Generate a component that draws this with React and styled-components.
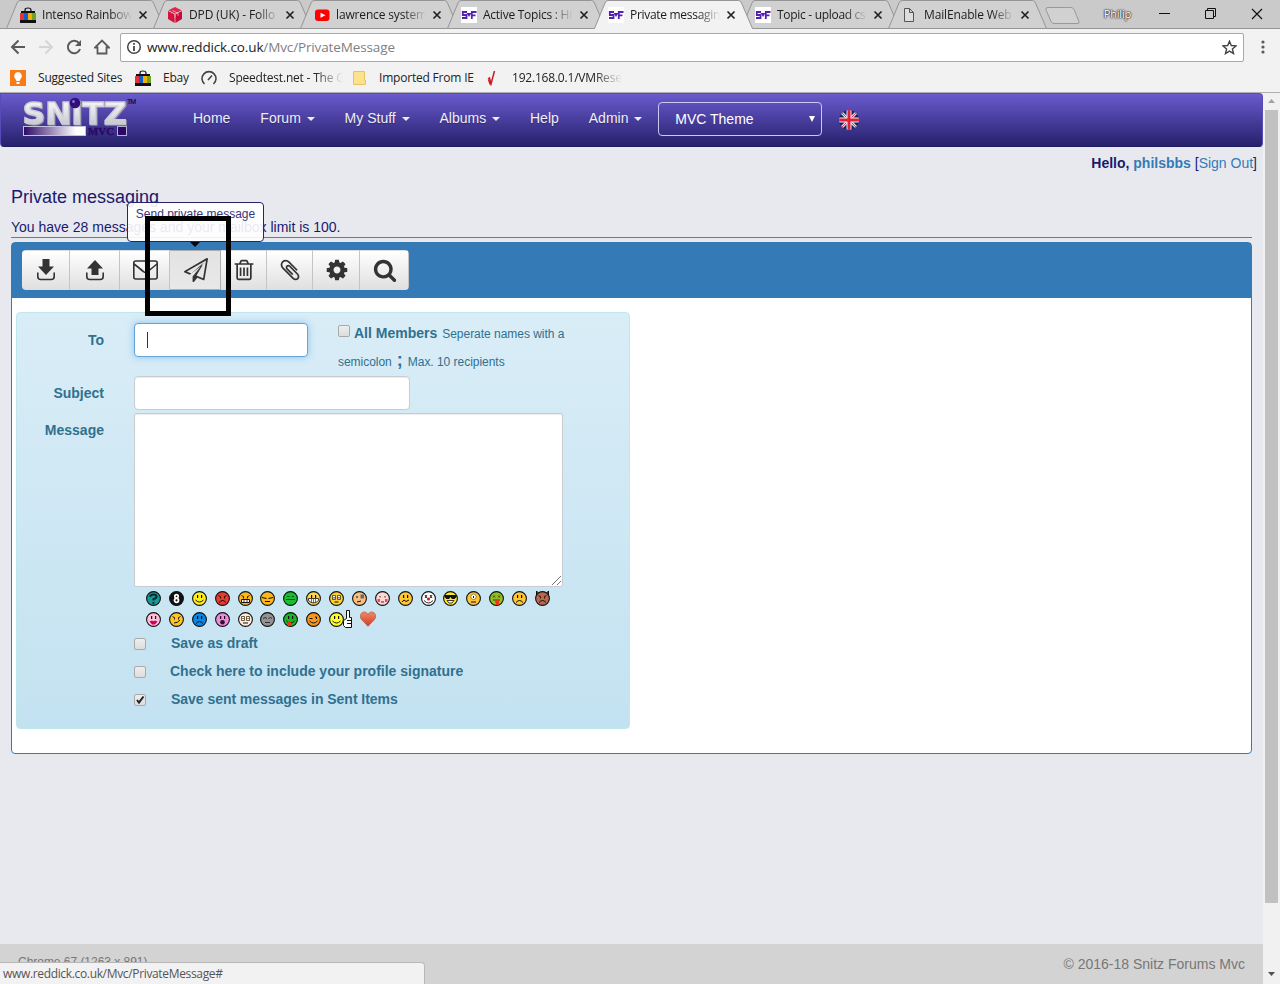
import React from "react";
import styled, { createGlobalStyle, css } from "styled-components";

const GlobalStyle = createGlobalStyle`
  *, *::before, *::after { box-sizing: border-box; }
  html, body { margin: 0; padding: 0; overflow: hidden; }
  body { font-family: "Liberation Sans", Arial, sans-serif; font-size: 14px; line-height: 20px; color: #191970; }
  svg { display: block; flex: none; }
`;

const uiFont = css`
  font-family: "Open Sans", "Noto Sans", sans-serif;
  font-size: 12px;
  white-space: nowrap;
`;

const Window = styled.div`
  width: 1280px;
  height: 984px;
  display: flex;
  flex-direction: column;
  overflow: hidden;
  background: #e8e9ee;
`;

/* ---------- browser frame ---------- */

const TabStrip = styled.div`
  height: 29px;
  flex: none;
  display: flex;
  background: #cacaca;
  padding-left: 6px;
  border-bottom: 1px solid #959595;
`;

const TabBox = styled.div`
  position: relative;
  z-index: ${(p) => (p.$active ? 2 : 1)};
  width: 160px;
  height: 29px;
  margin-right: -13px;
  padding-left: 14px;
  flex: none;
  display: flex;
  align-items: center;
  ${uiFont}
  color: #1c1c1c;
`;

const TabShape = styled.svg`
  position: absolute;
  left: 0;
  top: 0;
`;

const TabIcon = styled.span`
  position: relative;
  width: 16px;
  height: 16px;
  margin-right: 6px;
  flex: none;
`;

const TabTitle = styled.span`
  position: relative;
  width: 90px;
  overflow: hidden;
  letter-spacing: ${(p) => p.$tracking || -0.2}px;
  line-height: 20px;
  mask-image: linear-gradient(to right, #000 68px, transparent 90px);
`;

const TabClose = styled.svg`
  position: relative;
  margin-left: 6px;
`;

const NewTab = styled.svg`
  margin: 7px 0 0 10px;
`;

const WindowControls = styled.div`
  display: flex;
  align-items: center;
  margin-left: auto;
  padding-right: 17px;
  gap: 35px;
  height: 27px;
`;

const Profile = styled.span`
  ${uiFont}
  font-size: 11px;
  letter-spacing: -0.2px;
  color: #fff;
  text-shadow: 0 0 1px #333, 0 0 2px #333, 0 0 1px #555, 0 0 2px #666;
  margin-right: -7px;
`;

const Toolbar = styled.div`
  height: 34px;
  flex: none;
  display: flex;
  align-items: center;
  padding: 3px 11px 1px 10px;
  background: #f2f2f2;
`;

const NavButtons = styled.div`
  display: flex;
  gap: 12px;
  width: 110px;
`;

const Address = styled.div`
  ${uiFont}
  font-size: 13.5px;
  letter-spacing: -0.13px;
  flex: none;
  width: 1124px;
  height: 29px;
  display: flex;
  align-items: center;
  border: 1px solid #a8a8a8;
  border-radius: 2px;
  background: #fff;
  padding: 0 6px 0 5px;
  color: #222;
  & > svg:last-child { margin-left: auto; }
`;

const Url = styled.span`
  margin-left: 5px;
  span { color: #808080; }
`;

const MenuDots = styled.svg`
  margin-left: auto;
`;

const Bookmarks = styled.div`
  height: 30px;
  flex: none;
  display: flex;
  align-items: center;
  background: #f2f2f2;
  border-bottom: 1px solid #b0b0b0;
  padding: 0 0 0 10px;
  ${uiFont}
  color: #222;
`;

const Bookmark = styled.div`
  display: flex;
  align-items: center;
  width: ${(p) => p.$w}px;
  gap: 12px;
  flex: none;
`;

const BookmarkText = styled.span`
  ${(p) => p.$w && css`width: ${p.$w}px; overflow: hidden;`}
  letter-spacing: -0.2px;
  ${(p) => p.$fade && css`mask-image: linear-gradient(to right, #000 calc(100% - 28px), transparent);`}
`;

/* ---------- page ---------- */

const Viewport = styled.div`
  flex: 1;
  display: flex;
  min-height: 0;
`;

const Page = styled.div`
  position: relative;
  width: 1263px;
  display: flex;
  flex-direction: column;
`;

const Navbar = styled.nav`
  height: 54px;
  flex: none;
  display: flex;
  border-radius: 0 4px 4px 4px;
  background: linear-gradient(#6a5acd, #483d9d 50%, #26216b);
  border: 1px solid #5a4cb8;
  border-bottom-color: #201b60;
  color: #eeeef8;
  padding-left: 20px;
`;

const Logo = styled.svg`
  margin: 1px 41px 0 0;
`;

const NavItem = styled.a`
  display: flex;
  align-items: center;
  height: 20px;
  padding: 0 15px;
  margin-top: 14px;
  text-shadow: 0 1px 1px rgba(0, 0, 0, 0.3);
  white-space: nowrap;
`;

const Caret = styled.span`
  margin-left: 5.8px;
  margin-top: 2px;
  border-top: 4px solid currentColor;
  border-left: 4px solid transparent;
  border-right: 4px solid transparent;
`;

const ThemeSelect = styled.div`
  width: 164px;
  height: 34px;
  margin: 8px 17px 0 1px;
  padding: 0 6px 0 16px;
  display: flex;
  align-items: center;
  justify-content: space-between;
  border: 1px solid #ccc8ee;
  border-radius: 4px;
  color: #fff;
`;

const Flag = styled.svg`
  margin-top: 16px;
`;

const Greeting = styled.div`
  height: 20px;
  margin: 6px 6px 0 0;
  text-align: right;
  b span, a { color: #337ab7; }
`;

const Heading = styled.h1`
  margin: 14px 0 0 11px;
  font-size: 18px;
  font-weight: 400;
  line-height: 20px;
`;

const Quota = styled.div`
  margin: 10px 11px 4px;
  height: 21px;
  border-bottom: 1px solid #777;
`;

const Panel = styled.section`
  width: 1241px;
  height: 512px;
  margin-left: 11px;
  border: 1px solid #337ab7;
  border-radius: 4px;
  background: #fff;
`;

const PanelHead = styled.div`
  height: 55px;
  background: #337ab7;
  padding: 7px 10px;
`;

const ButtonGroup = styled.div`
  display: flex;
  width: max-content;
  height: 40px;
  border-radius: 4px;
  overflow: hidden;
`;

const ToolButton = styled.button`
  width: ${(p) => p.$w}px;
  height: 40px;
  padding: 0 0 1px 1px;
  display: flex;
  align-items: center;
  justify-content: center;
  border: 1px solid #ddd;
  border-width: 1px 1px 1px 0;
  border-right-color: #c4c4c4;
  color: #333;
  background: linear-gradient(#fff, #e0e0e0);
  ${(p) => p.$hover && css`
    background: linear-gradient(#e3e3e3, #e8e8e8);
    border-color: #adadad;
  `}
`;

const Well = styled.form`
  width: 614px;
  height: 417px;
  margin: 14px 0 0 4px;
  padding-top: 6px;
  border: 1px solid #c0e6ee;
  border-radius: 4px;
  background: linear-gradient(#d9edf7, #c3e2f1);
  color: #31708f;
`;

const FormRow = styled.div`
  display: flex;
  gap: 30px;
  height: ${(p) => p.$h}px;
`;

const Label = styled.label`
  width: 87px;
  text-align: right;
  font-weight: 700;
  padding-top: ${(p) => p.$top}px;
`;

const Field = styled.div`
  width: ${(p) => p.$w}px;
  height: ${(p) => p.$h || 34}px;
  margin-top: ${(p) => p.$top || 0}px;
  background: #fff;
  border: 1px solid #c8ccd0;
  border-radius: ${(p) => (p.$square ? 2 : 4)}px;
  box-shadow: inset 0 1px 1px rgba(0, 0, 0, 0.075);
  display: flex;
  ${(p) => p.$focus && css`
    border-color: #66a5d8;
    box-shadow: 0 0 7px rgba(102, 175, 233, 0.7);
  `}
`;

const TextCursor = styled.i`
  width: 1px;
  height: 16px;
  margin: 8px 0 0 12px;
  background: #333;
`;

const Grip = styled.svg`
  margin: auto 0 0 auto;
`;

const Hint = styled.div`
  width: 240px;
  padding-top: 1px;
`;

const HintLine = styled.div`
  display: flex;
  align-items: baseline;
  height: 28px;
  font-size: 12px;
  line-height: 28px;
  letter-spacing: -0.03px;
  white-space: nowrap;
`;

const HintStrong = styled.b`
  font-size: ${(p) => p.$size}px;
  line-height: 20px;
  letter-spacing: 0;
  margin: 0 ${(p) => p.$mr}px 0 ${(p) => p.$ml}px;
`;

const Check = styled.span`
  display: inline-flex;
  width: 12px;
  height: 12px;
  border: 1px solid #a9a9a9;
  border-radius: 2px;
  background: linear-gradient(#eee, #ddd);
  ${(p) => p.$inline && css`align-self: center; margin-top: -6px;`}
`;

const Smileys = styled.div`
  display: grid;
  grid-template-columns: repeat(18, 22.88px);
  grid-auto-rows: 21px;
  margin: 0 0 0 129px;
  padding-top: 4px;
  height: 43px;
`;

const SmileyCell = styled.span`
  margin: ${(p) => (p.$kind === "thumb" ? "-2px 0 0" : p.$kind === "heart" ? "-1px 0 0 8px" : "0")};
`;

const Option = styled.div`
  display: flex;
  align-items: center;
  height: 28px;
  padding-left: 117px;
  font-weight: 700;
`;

const OptionText = styled.span`
  margin: -2px 0 0 ${(p) => p.$ml || 25}px;
  letter-spacing: ${(p) => (p.$ml ? 0 : -0.04)}px;
`;

const Footer = styled.footer`
  height: 40px;
  margin-top: auto;
  padding: 10px 18px 0;
  display: flex;
  justify-content: space-between;
  background: #d3d3d3;
  color: #777;
`;

const Agent = styled.span`
  font-size: 12px;
  line-height: 14px;
  letter-spacing: -0.03px;
  padding-top: 1px;
`;

const StatusBubble = styled.div`
  position: absolute;
  left: 0;
  bottom: 0;
  width: 425px;
  height: 22px;
  padding: 0 3px;
  border: 1px solid #b8b8b8;
  border-width: 1px 1px 0 0;
  border-radius: 0 4px 0 0;
  background: #f2f2f2;
  color: #555;
  ${uiFont}
  line-height: 22px;
  letter-spacing: -0.34px;
`;

const Tooltip = styled.div`
  position: absolute;
  z-index: 3;
  left: 127px;
  top: 109px;
  width: 137px;
  height: 40px;
  border: 1px solid #29236f;
  border-radius: 4px;
  background: rgba(255, 255, 255, 0.9);
  color: #3b3679;
  text-align: center;
  font-size: 12px;
  line-height: 22px;
  white-space: nowrap;
  &::after {
    content: "";
    position: absolute;
    left: 62px;
    top: 39px;
    border-top: 5px solid #060816;
    border-left: 5px solid transparent;
    border-right: 5px solid transparent;
  }
`;

const Highlight = styled.div`
  position: absolute;
  z-index: 4;
  left: 145px;
  top: 123px;
  width: 86px;
  height: 100px;
  border: 5px solid #000;
`;

const Scrollbar = styled.div`
  width: 17px;
  display: flex;
  flex-direction: column;
  align-items: center;
  background: #f1f1f1;
  padding: 6px 0 8px;
  & > svg:last-child { margin-top: auto; }
`;

const Thumb = styled.div`
  width: 13px;
  height: 793px;
  margin-top: 7px;
  background: #c1c1c1;
`;

/* ---------- drawings ---------- */

const BagIcon = () => (
  <svg width="16" height="16" viewBox="0 0 16 16">
    <path d="M5 5V3q0-2 3-2t3 2v2" fill="none" stroke="#111" strokeWidth="1.2" />
    <path d="M1 4h14v2H1z" fill="#111" />
    <path d="M0 6h4v7H0z" fill="#e53238" /><path d="M4 6h4v7H4z" fill="#1260c4" />
    <path d="M8 6h4v7H8z" fill="#f5af02" /><path d="M12 6h4v7h-4z" fill="#6ea51c" />
    <path d="M0 13h16v3H0z" fill="#111" />
  </svg>
);
const DpdIcon = () => (
  <svg width="16" height="16" viewBox="0 0 16 16">
    <path d="M8 0l6.6 3.300L8 6.800 1.400 3.300z" fill="#e0284f" />
    <path d="M1 4l6.600 3.600V16L1 12z" fill="#d5113c" /><path d="M15 4L8.400 7.600V16L15 12z" fill="#c80b38" />
    <path d="M5.500 3.500L11 6.300v2.500M8 7.500v3" fill="none" stroke="#f1b8c6" strokeWidth=".8" />
  </svg>
);
const TubeIcon = () => (
  <svg width="16" height="16" viewBox="0 0 16 16">
    <rect x="1" y="2.500" width="14.500" height="11.500" rx="3" fill="#f00" /><path d="M6.500 5.700l5 2.500-5 2.600z" fill="#fff" />
  </svg>
);
const SfIcon = () => (
  <svg width="16" height="16" viewBox="0 0 16 16">
    <rect width="16" height="16" fill="#fff" />
    <path d="M6 5H1.800v3h3.700v3H1M10.800 12V5H15.500M10.800 8.300H14.500" fill="none" stroke="#5421ae" strokeWidth="1.800" />
    <path d="M5.500 6h5L8 10z" fill="#5421ae" />
  </svg>
);
const FileIcon = () => (
  <svg width="16" height="16" viewBox="0 0 16 16">
    <path d="M2.500 1.500h5l4 4v9h-9zM7.500 1.500v4h4" fill="#ddd" stroke="#555" />
  </svg>
);

const FACES = [
  ["#159a97", "question"], ["#111", "eight"], ["#ffef17", "smile"], ["#e73d31", "angry"], ["#ffb718", "grit"], ["#ffb718", "smirk"],
  ["#18bd31", "flat"], ["#ffd84a", "grin"], ["#ffcf31", "wide"], ["#ffbd7b", "patch"], ["#ffd5d5", "blush"], ["#ffc631", "wry"],
  ["#fff", "clown"], ["#ffe72c", "cool"], ["#ffc631", "cyclops"], ["#91bf24", "sick"], ["#ffc631", "sad"], ["#b8684f", "devil"],
  ["#ffc0d8", "kiss"], ["#ffc425", "evil"], ["#0b86e3", "sad"], ["#f087e1", "shout"], ["#ffeadb", "glasses"], ["#929292", "sleep"],
  ["#16b721", "tongue"], ["#f59622", "wink"], ["#ffff20", "thumb"], ["#df5838", "heart"],
];

function FaceDetail({ kind }) {
  const eyes = <path d="M5 4h1.200v3H5zM9 4h1.200v3H9z" fill="#111" />;
  const smile = <path d="M3.500 9q4 4 8 0" fill="none" stroke="#111" />;
  const frown = <path d="M4 11.500q3.500-4 7 0" fill="none" stroke="#111" />;
  const brows = <path d="M3.500 4.500l2.500 1.500M11.500 4.500L9 6M5.500 6v1.500M9.500 6v1.500" stroke="#111" strokeWidth=".9" />;
  const roundEyes = <path d="M3.500 4.500h3v4h-3zM8.500 4.500h3v4h-3z" fill="#fff" stroke="#443410" strokeWidth=".8" />;
  switch (kind) {
    case "question": return <path d="M4.500 6V4.500Q5 3.500 7.500 3.500q3 0 3 2T7.500 8v1.500M7.500 11v1.800" fill="none" stroke="#042b34" strokeWidth="2" />;
    case "eight": return <><circle cx="7.500" cy="5.300" r="1.700" fill="none" stroke="#fff" strokeWidth="1.700" /><circle cx="7.500" cy="9.300" r="2" fill="none" stroke="#fff" strokeWidth="1.800" /></>;
    case "angry": return <>{brows}{frown}</>;
    case "grit": return <>{brows}<path d="M3.500 8.500h8v3h-8z" fill="#fff" stroke="#111" /><path d="M6 9v3M9 9v3" stroke="#111" strokeWidth=".8" /></>;
    case "smirk": return <path d="M2 6.500l4.500 1M13 6.500l-4.500 1M5 10.500h5" stroke="#111" strokeWidth="1.200" fill="none" />;
    case "flat": return <path d="M4 5.500h2.500M8.500 5.500H11M3 8.500h9" stroke="#075714" fill="none" />;
    case "grin": return <>{eyes}<path d="M2.500 7.500h10v2q-5 5-10 0z" fill="#fff" stroke="#111" strokeWidth=".8" /><path d="M5.500 8v3.500M9.500 8v3.500M7.500 8v4" stroke="#333" strokeWidth=".7" /></>;
    case "wide": return <>{roundEyes}<path d="M4.500 6h1v1.500h-1zM9.500 6h1v1.500h-1z" fill="#111" /><path d="M5.500 11h4" stroke="#111" /></>;
    case "patch": return <><path d="M8.500 3.500h3.500v4H8.500z" fill="#566b7c" /><path d="M5 5v2M5 11l4-1" stroke="#111" /></>;
    case "blush": return <><path d="M5 5v1.500M10 5v1.500M6 11h3" stroke="#333" /><path d="M2.500 8h2.500v3H2.500zM10 8h2.500v3H10z" fill="#ff4456" /></>;
    case "wry": return <>{eyes}<path d="M4 11l2-2 2 1.500L11 9" fill="none" stroke="#111" /></>;
    case "clown": return <><path d="M4 4l2 3M6 4L4 7M9 4l2 3M11 4L9 7M3 9.500q4.500 5 9 0" fill="none" stroke="#111" strokeWidth=".9" /><circle cx="7.500" cy="8" r="1.600" fill="#e0182d" /></>;
    case "cool": return <><path d="M1.500 4h12v2l-2 2H9L7.500 6 6 8H3.500l-2-2z" fill="#111" /><path d="M4 9.500h7l-2 2.500H6z" fill="#fff" stroke="#111" strokeWidth=".8" /></>;
    case "cyclops": return <><circle cx="7.500" cy="5.800" r="2.700" fill="#fff" stroke="#8a681d" strokeWidth=".8" /><path d="M7 5h1v2H7z" fill="#111" /><path d="M5 11h5" stroke="#111" /></>;
    case "sick": return <><path d="M4 4.500l2 2M6 4.500l-2 2M9 4.500l2 2M11 4.500l-2 2M4 9h7" stroke="#263f04" strokeWidth=".9" /><path d="M6 9h4v5H7z" fill="#e33a13" /></>;
    case "sad": return <>{eyes}{frown}</>;
    case "devil": return <>{brows}{frown}</>;
    case "kiss": return <>{eyes}<path d="M3.500 9.500l2.500-1 1.500.8L9 8.500l2.500 1-2.500 3H6z" fill="#c90062" /></>;
    case "evil": return <>{brows}<path d="M5 11q4 0 6-3" fill="none" stroke="#111" /></>;
    case "shout": return <>{eyes}<circle cx="7.500" cy="10.200" r="2.300" fill="#31102e" /></>;
    case "glasses": return <>{roundEyes}<path d="M5 6v1M10 6v1M5 11h5" stroke="#111" /></>;
    case "sleep": return <path d="M3 6.500l2-1 2 1M8.500 6.500l2-1 1.500 1M5 10.500h5" fill="none" stroke="#333" />;
    case "tongue": return <>{eyes}{smile}<path d="M4 9.500h4V14H5z" fill="#e43716" /></>;
    case "wink": return <><path d="M3.500 6.500h3M9 5h1.500v2" fill="none" stroke="#111" />{smile}</>;
    default: return <>{eyes}{smile}</>;
  }
}

function Smiley({ color, kind }) {
  if (kind === "heart") {
    return (
      <svg width="16" height="16" viewBox="0 0 16 16">
        <defs><linearGradient id="heart" x2="0" y2="1"><stop stopColor="#f38b65" /><stop offset="1" stopColor="#cc3a26" /></linearGradient></defs>
        <path d="M8 15.300L1.500 8.500C-1 5 1 1 4.300 1 6.200 1 7.400 2.200 8 3.500 8.600 2.200 9.800 1 11.700 1 15 1 17 5 14.500 8.500z" fill="url(#heart)" stroke="#ae4632" strokeWidth=".6" />
      </svg>
    );
  }
  const thumb = kind === "thumb";
  return (
    <svg width={thumb ? 24 : 15} height={thumb ? 19 : 15} viewBox={thumb ? "0 -2 24 19" : "0 0 15 15"}>
      {kind === "devil" && <path d="M1.500 0v4l3-1zM13.500 0v4l-3-1z" fill="#a8604d" stroke="#111" />}
      <circle cx="7.500" cy="7.500" r="6.900" fill={color} stroke="#111" strokeWidth="1.100" />
      <FaceDetail kind={kind} />
      {thumb && <path d="M17.500-1.500h3v7h2v10h-6l-2-2v-5l3-2zM18 8.500h4.500M18 11.500h4.500" fill="#fff" stroke="#111" />}
    </svg>
  );
}

const PATHS = {
  trash: "M704 736v576q0 14-9 23t-23 9h-64q-14 0-23-9t-9-23v-576q0-14 9-23t23-9h64q14 0 23 9t9 23zm256 0v576q0 14-9 23t-23 9h-64q-14 0-23-9t-9-23v-576q0-14 9-23t23-9h64q14 0 23 9t9 23zm256 0v576q0 14-9 23t-23 9h-64q-14 0-23-9t-9-23v-576q0-14 9-23t23-9h64q14 0 23 9t9 23zm128 724v-948h-896v948q0 22 7 40.500t14.500 27 10.500 8.500h832q3 0 10.500-8.500t14.500-27 7-40.500zm-672-1076h448l-48-117q-7-9-17-11h-317q-10 2-17 11zm928 32v64q0 14-9 23t-23 9h-96v948q0 83-47 143.500t-113 60.500h-832q-66 0-113-58.500t-47-141.500v-952h-96q-14 0-23-9t-9-23v-64q0-14 9-23t23-9h309l70-167q15-37 54-63t79-26h320q40 0 79 26t54 63l70 167h309q14 0 23 9t9 23z",
  plane: "M1764 11q33 24 27 64l-256 1536q-5 29-32 45-14 8-31 8-11 0-24-5l-453-185-242 295q-18 23-49 23-13 0-22-4-19-7-30.500-23.500t-11.500-36.500v-349l864-1059-1069 925-395-162q-37-14-40-55-2-40 32-59l1664-960q15-9 32-9 20 0 36 11zm-342 1499l221-1323-1434 827 336 137 863-639-478 797z",
  clip: "M1596 1385q0 117-79 196t-196 79q-135 0-235-100l-777-776q-113-115-113-271 0-159 110-270t269-111q158 0 273 113l605 606q10 10 10 22 0 16-30.500 46.500t-46.500 30.500q-13 0-23-10l-606-607q-79-77-181-77-106 0-179 75t-73 181q0 105 76 181l776 777q63 63 145 63 64 0 106-42t42-106q0-82-63-145l-581-581q-26-24-60-24-29 0-48 19t-19 48q0 32 25 59l410 410q10 10 10 22 0 16-31 47t-47 31q-12 0-22-10l-410-410q-63-61-63-149 0-82 57-139t139-57q88 0 149 63l581 581q100 98 100 235z",
  cog: "M1152 896q0-106-75-181t-181-75-181 75-75 181 75 181 181 75 181-75 75-181zm512-109v222q0 12-8 23t-20 13l-185 28q-19 54-39 91 35 50 107 138 10 12 10 25t-9 23q-27 37-99 108t-94 71q-12 0-26-9l-138-108q-44 23-91 38-16 136-29 186-7 28-36 28h-222q-14 0-24.500-8.500t-11.500-21.500l-28-184q-49-16-90-37l-141 107q-10 9-25 9-14 0-25-11-126-114-165-168-7-10-7-23 0-12 8-23 15-21 51-66.500t54-70.500q-27-50-41-99l-183-27q-13-2-21-12.500t-8-23.500v-222q0-12 8-23t19-13l186-28q14-46 39-92-40-57-107-138-10-12-10-24 0-10 9-23 26-36 98.500-107.500t94.500-71.500q13 0 26 10l138 107q44-23 91-38 16-136 29-186 7-28 36-28h222q14 0 24.500 8.500t11.500 21.500l28 184q49 16 90 37l142-107q9-9 24-9 13 0 25 10 129 119 165 170 7 8 7 22 0 12-8 23-15 21-51 66.500t-54 70.500q26 50 41 98l183 28q13 2 21 12.500t8 23.500z",
  search: "M1216 832q0-185-131.500-316.500t-316.500-131.500-316.500 131.500-131.500 316.500 131.500 316.500 316.500 131.500 316.500-131.500 131.500-316.500zm512 832q0 52-38 90t-90 38q-54 0-90-38l-343-342q-179 124-399 124-143 0-273.500-55.500t-225-150-150-225-55.500-273.500 55.500-273.500 150-225 225-150 273.500-55.500 273.500 55.500 225 150 150 225 55.500 273.500q0 220-124 399l343 343q37 37 37 90z",
};

const Glyph = ({ name, size = 24 }) => (
  <svg width={size} height={size} viewBox="0 0 1792 1792" fill="currentColor"><path d={PATHS[name]} /></svg>
);
const TrayIcon = ({ up }) => (
  <svg width="18" height="22" viewBox="0 0 18 22">
    <path d="M.8 13.500v4q0 3 3 3h10.400q3 0 3-3v-4" fill="none" stroke="currentColor" strokeWidth="1.600" />
    <path d={up ? "M9 1l8 8.500h-4.500V16h-7V9.500H1z" : "M5.500 0h7v7.500H17L9 16 1 7.500h4.500z"} fill="currentColor" />
  </svg>
);
const MailIcon = () => (
  <svg width="25" height="20" viewBox="0 0 25 20" fill="none" stroke="currentColor" strokeWidth="1.600">
    <rect x=".8" y="1" width="23.400" height="18" rx="2" />
    <path d="M1 4q6.500 5 9.500 7.700 2 1.500 4 0Q18 9 24 4" />
  </svg>
);

const Tab = ({ icon, title, active, tracking }) => (
  <TabBox $active={active}>
    <TabShape width="160" height="29">
      <path d="M.5 28.500L11 3Q12 .5 14 .5H144.500Q146.500.5 147.500 3L158.500 28.500" fill={active ? "#f2f2f2" : "#d1d1d1"} stroke="#959595" />
      <path d="M1 28.500h157" stroke={active ? "#f2f2f2" : "#959595"} />
    </TabShape>
    <TabIcon>{icon}</TabIcon>
    <TabTitle $tracking={tracking}>{title}</TabTitle>
    <TabClose width="10" height="10"><path d="M1.500 1.500l7 7m0-7l-7 7" stroke="#222" strokeWidth="1.700" /></TabClose>
  </TabBox>
);

const Tick = () => (
  <svg width="10" height="10"><path d="M2 5l2 2.500L8.500 1.500" fill="none" stroke="#222" strokeWidth="2" /></svg>
);

export default function App() {
  return (
    <Window>
      <GlobalStyle />
      <TabStrip>
        <Tab icon={<BagIcon />} title="Intenso Rainbow" tracking={-0.2} />
        <Tab icon={<DpdIcon />} title="DPD (UK) - Follo" tracking={-0.1} />
        <Tab icon={<TubeIcon />} title="lawrence system" tracking={-0.15} />
        <Tab icon={<SfIcon />} title="Active Topics : Hi" tracking={-0.25} />
        <Tab icon={<SfIcon />} title="Private messagin" tracking={-0.3} active />
        <Tab icon={<SfIcon />} title="Topic - upload cs" tracking={-0.3} />
        <Tab icon={<FileIcon />} title="MailEnable Web" tracking={-0.15} />
        <NewTab width="35" height="18">
          <path d="M3 .5h23q2 0 3 2l5 12q1 2-2 2H9q-2 0-3-2L1 3Q0 .5 3 .5z" fill="#d1d1d1" stroke="#999" />
        </NewTab>
        <WindowControls>
          <Profile>Philip</Profile>
          <svg width="11" height="11"><path d="M0 5.500h11" stroke="#111" /></svg>
          <svg width="11" height="11"><path d="M.5 2.500h8v8h-8zM2.500 2.500v-2h8v8h-2" fill="none" stroke="#111" /></svg>
          <svg width="12" height="12"><path d="M1 1l10 10m0-10L1 11" stroke="#111" strokeWidth="1.200" /></svg>
        </WindowControls>
      </TabStrip>

      <Toolbar>
        <NavButtons>
          <svg width="16" height="16" fill="none" stroke="#5a5a5a" strokeWidth="2"><path d="M15 8H2m6.500-6.500L2 8l6.500 6.500" /></svg>
          <svg width="16" height="16" fill="none" stroke="#d5d5d5" strokeWidth="2"><path d="M1 8h13M7.500 1.500L14 8l-6.500 6.500" /></svg>
          <svg width="16" height="16" fill="none" stroke="#5a5a5a" strokeWidth="2"><path d="M13 4.200A6.200 6.200 0 1 0 14 10" /><path d="M15 1v6H9z" fill="#5a5a5a" stroke="none" /></svg>
          <svg width="16" height="16" fill="none" stroke="#5a5a5a" strokeWidth="1.800"><path d="M1 8.500h2.500v6h9v-6H15L8 1.500z" /></svg>
        </NavButtons>
        <Address>
          <svg width="16" height="16" fill="none" stroke="#444" strokeWidth="1.500"><circle cx="8" cy="8" r="6.300" /><path d="M8 7v5M8 4v1.700" strokeWidth="1.800" /></svg>
          <Url>www.reddick.co.uk<span>/Mvc/PrivateMessage</span></Url>
          <svg width="15" height="15" viewBox="0 0 16 16"><path d="M8 1.300l1.900 4.600 5 .4-3.800 3.300 1.200 4.900L8 11.900l-4.300 2.600 1.200-4.900L1.100 6.300l5-.4z" fill="none" stroke="#444" strokeWidth="1.500" /></svg>
        </Address>
        <MenuDots width="13" height="16"><g fill="#5a5a5a"><circle cx="7" cy="3" r="1.600" /><circle cx="7" cy="8" r="1.600" /><circle cx="7" cy="13" r="1.600" /></g></MenuDots>
      </Toolbar>

      <Bookmarks>
        <Bookmark $w={125}>
          <svg width="16" height="16"><rect width="16" height="16" fill="#f97b16" /><path d="M8 2a4 4 0 0 0-2.500 7l.8 2h3.400l.8-2A4 4 0 0 0 8 2zM6.500 12h3v2h-3z" fill="#fff" /></svg>
          <BookmarkText>Suggested Sites</BookmarkText>
        </Bookmark>
        <Bookmark $w={66}><BagIcon /><BookmarkText>Ebay</BookmarkText></Bookmark>
        <Bookmark $w={150}>
          <svg width="16" height="16" fill="none" stroke="#444" strokeWidth="1.600"><path d="M3.500 14A7 7 0 1 1 12.500 14M7 10l4-4.500" /></svg>
          <BookmarkText $w={114} $fade>Speedtest.net - The G</BookmarkText>
        </Bookmark>
        <Bookmark $w={133}>
          <svg width="16" height="16"><path d="M2.500 1.500h11v9h1v4h-12z" fill="#fbe28d" stroke="#e6c45f" /></svg>
          <BookmarkText>Imported From IE</BookmarkText>
        </Bookmark>
        <Bookmark $w={140}>
          <svg width="16" height="16" fill="none" stroke="#c51c24" strokeWidth="1.500"><path d="M4 9l1.500-1 1.500 6L10.500 1" /><path d="M4.500 9.500l1.800 5" /></svg>
          <BookmarkText $w={110} $fade>192.168.0.1/VMReset</BookmarkText>
        </Bookmark>
      </Bookmarks>

      <Viewport>
        <Page>
          <Navbar>
            <Logo width="116" height="44">
              <defs>
                <linearGradient id="metal" x2="0" y2="1"><stop stopColor="#fff" /><stop offset=".55" stopColor="#dedee6" /><stop offset="1" stopColor="#b8b8c2" /></linearGradient>
                <linearGradient id="bar"><stop stopColor="#2c0964" /><stop offset=".85" stopColor="#fff" /></linearGradient>
              </defs>
              <text x="1.500" y="28.500" fontFamily="DejaVu Sans, sans-serif" fontWeight="700" fontSize="30" textLength="104" lengthAdjust="spacingAndGlyphs" fill="url(#metal)" stroke="#cfced8" strokeWidth="1.400" style={{ filter: "drop-shadow(1px 1.500px 0 #8a879c)" }}>SNiTZ</text>
              <circle cx="54" cy="8" r="5.300" fill="#32107c" /><circle cx="52.500" cy="6.500" r="1.500" fill="#8670c4" />
              <rect x="2.500" y="31.500" width="62" height="9" fill="url(#bar)" stroke="#c5c0df" />
              <text x="67" y="40" fontFamily="Liberation Serif, serif" fontWeight="700" fontSize="10" textLength="26" lengthAdjust="spacingAndGlyphs" fill="#2c0964" stroke="#2c0964" strokeWidth=".4">MVC</text>
              <rect x="96.500" y="31.500" width="9" height="9" fill="#2c0964" stroke="#b6afd8" />
              <text x="106" y="9" fontFamily="Liberation Sans, sans-serif" fontSize="7" textLength="9" fill="#0d0940" stroke="#0d0940" strokeWidth=".2">TM</text>
            </Logo>
            <NavItem>Home</NavItem>
            <NavItem>Forum <Caret /></NavItem>
            <NavItem>My Stuff <Caret /></NavItem>
            <NavItem>Albums <Caret /></NavItem>
            <NavItem>Help</NavItem>
            <NavItem>Admin <Caret /></NavItem>
            <ThemeSelect>
              <span>MVC Theme</span>
              <svg width="6" height="6"><path d="M0 0h6L3 6z" fill="#fff" /></svg>
            </ThemeSelect>
            <Flag width="20" height="20" viewBox="0 0 20 20">
              <defs><clipPath id="round"><circle cx="10" cy="10" r="10" /></clipPath></defs>
              <g clipPath="url(#round)">
                <path d="M0 0h20v20H0z" fill="#15245f" />
                <path d="M1 1l18 18M19 1L1 19" stroke="#e4dfea" strokeWidth="2.800" />
                <path d="M1 1l18 18M19 1L1 19" stroke="#d5223b" strokeWidth=".9" />
                <path d="M10 0v20M0 10h20" stroke="#f2ecf2" strokeWidth="5" />
                <path d="M10 0v20M0 10h20" stroke="#df2036" strokeWidth="3" />
              </g>
            </Flag>
          </Navbar>

          <Greeting><b>Hello, <span>philsbbs</span></b> [<a>Sign Out</a>]</Greeting>
          <Heading>Private messaging</Heading>
          <Quota>You have 28 messages and your mailbox limit is 100.</Quota>

          <Panel>
            <PanelHead>
              <ButtonGroup>
                <ToolButton type="button" $w={48}><TrayIcon /></ToolButton>
                <ToolButton type="button" $w={50}><TrayIcon up /></ToolButton>
                <ToolButton type="button" $w={50}><MailIcon /></ToolButton>
                <ToolButton type="button" $w={51} $hover><Glyph name="plane" /></ToolButton>
                <ToolButton type="button" $w={46}><Glyph name="trash" /></ToolButton>
                <ToolButton type="button" $w={46}><Glyph name="clip" /></ToolButton>
                <ToolButton type="button" $w={47}><Glyph name="cog" /></ToolButton>
                <ToolButton type="button" $w={49}><Glyph name="search" /></ToolButton>
              </ButtonGroup>
            </PanelHead>
            <Well>
              <FormRow $h={57}>
                <Label $top={11}>To</Label>
                <Field $w={174} $top={4} $focus><TextCursor /></Field>
                <Hint>
                  <HintLine><Check $inline /><HintStrong $size={14} $ml={4} $mr={5}>All Members</HintStrong><span>Seperate names with a</span></HintLine>
                  <HintLine><span>semicolon</span><HintStrong $size={18} $ml={5} $mr={5}>;</HintStrong><span>Max. 10 recipients</span></HintLine>
                </Hint>
              </FormRow>
              <FormRow $h={37}>
                <Label $top={7}>Subject</Label>
                <Field $w={276} />
              </FormRow>
              <FormRow $h={174}>
                <Label $top={7}>Message</Label>
                <Field $w={429} $h={174} $square>
                  <Grip width="11" height="11"><path d="M1 10L10 1M6 10l4-4" stroke="#777" /></Grip>
                </Field>
              </FormRow>
              <Smileys>
                {FACES.map(([color, kind], i) => (
                  <SmileyCell key={i} $kind={kind}><Smiley color={color} kind={kind} /></SmileyCell>
                ))}
              </Smileys>
              <Option><Check /><OptionText>Save as draft</OptionText></Option>
              <Option><Check /><OptionText $ml={24}>Check here to include your profile signature</OptionText></Option>
              <Option><Check><Tick /></Check><OptionText>Save sent messages in Sent Items</OptionText></Option>
            </Well>
          </Panel>

          <Footer>
            <Agent>Chrome 67 (1263 x 891)</Agent>
            <span>© 2016-18 Snitz Forums Mvc</span>
          </Footer>

          <Tooltip>Send private message</Tooltip>
          <Highlight />
          <StatusBubble>www.reddick.co.uk/Mvc/PrivateMessage#</StatusBubble>
        </Page>
        <Scrollbar>
          <svg width="7" height="4"><path d="M0 4h7L3.500 0z" fill="#a3a3a3" /></svg>
          <Thumb />
          <svg width="7" height="4"><path d="M0 0h7L3.500 4z" fill="#505050" /></svg>
        </Scrollbar>
      </Viewport>
    </Window>
  );
}
